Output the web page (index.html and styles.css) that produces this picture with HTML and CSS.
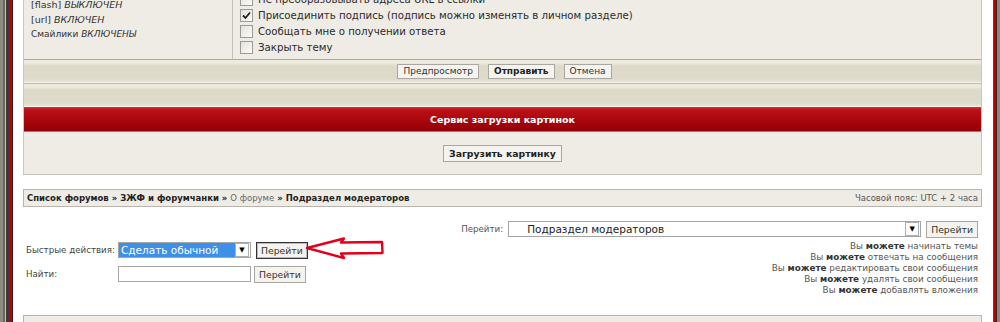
FILE: index.html
```html
<!DOCTYPE html>
<html lang="ru">

<head>
    <meta charset="UTF-8">
    <title>Подраздел модераторов</title>
    <link rel="stylesheet" href="styles.css">
</head>

<body>
    <div class="frame">
        <div class="edge-left"></div>

        <div class="sheet">
            <div class="post-box">
                <div class="options">
                    <div class="opt-info">
                        <p>[flash] <i>ВЫКЛЮЧЕН</i></p>
                        <p>[url] <i>ВКЛЮЧЕН</i></p>
                        <p class="smiles">Смайлики <i>ВКЛЮЧЕНЫ</i></p>
                    </div>
                    <div class="opt-checks">
                        <div class="check"><span class="box"></span>Не преобразовывать адреса URL в ссылки</div>
                        <div class="check"><span class="box">
                                <svg width="9" height="9" viewBox="0 0 9 9">
                                    <path d="M1 4.5 L3.5 7 L8 1.5" fill="none" stroke="#222" stroke-width="1.8" />
                                </svg>
                            </span>Присоединить подпись (подпись можно изменять в личном разделе)</div>
                        <div class="check"><span class="box"></span>Сообщать мне о получении ответа</div>
                        <div class="check"><span class="box"></span>Закрыть тему</div>
                    </div>
                </div>

                <div class="bar bar-buttons">
                    <button class="btn">Предпросмотр</button>
                    <button class="btn btn-main">Отправить</button>
                    <button class="btn">Отмена</button>
                </div>
                <div class="bar"></div>

                <div class="red-head">Сервис загрузки картинок</div>
                <div class="upload">
                    <button class="btn btn-main">Загрузить картинку</button>
                </div>
            </div>

            <div class="crumbs">
                <div class="crumbs-path">
                    Список форумов &raquo; ЗЖФ и форумчанки &raquo; <span class="grey">О форуме</span> &raquo; Подраздел модераторов
                </div>
                <div class="crumbs-tz">Часовой пояс: UTC + 2 часа</div>
            </div>

            <div class="tools">
                <div class="tools-left">
                    <div class="tool-row">
                        <span class="tool-label">Быстрые действия:</span>
                        <div class="fake-select quick">
                            <span class="sel-text">Сделать обычной</span>
                            <span class="sel-arrow">&#9660;</span>
                        </div>
                        <button class="btn btn-go focused">Перейти</button>
                    </div>
                    <div class="tool-row">
                        <span class="tool-label">Найти:</span>
                        <div class="fake-input"></div>
                        <button class="btn btn-go btn-find">Перейти</button>
                    </div>
                </div>

                <div class="tools-right">
                    <div class="jump">
                        <span class="jump-label">Перейти:</span>
                        <div class="fake-select jump-select">
                            <span class="sel-text">Подраздел модераторов</span>
                            <span class="sel-arrow">&#9660;</span>
                        </div>
                        <button class="btn btn-go">Перейти</button>
                    </div>
                    <ul class="rules">
                        <li>Вы <b>можете</b> начинать темы</li>
                        <li>Вы <b>можете</b> отвечать на сообщения</li>
                        <li>Вы <b>можете</b> редактировать свои сообщения</li>
                        <li>Вы <b>можете</b> удалять свои сообщения</li>
                        <li>Вы <b>можете</b> добавлять вложения</li>
                    </ul>
                </div>

                <!-- красная стрелка поверх скриншота -->
                <svg class="arrow" width="82" height="24" viewBox="0 0 82 24">
                    <path d="M2 11 L39 1.5 L36 5.5 L77 5 L77.5 16 L36 16.5 L39 21 Z" fill="#fff" stroke="#e3001b"
                        stroke-width="2.4" stroke-linejoin="round" />
                </svg>
            </div>

            <div class="footer-bar"></div>
        </div>

        <div class="edge-right"></div>
    </div>
</body>

</html>
```

FILE: styles.css
```css
body {
    margin: 0;
    padding: 0;
    height: 322px;
    overflow: hidden;
    background: #fff;
    font-family: "DejaVu Sans", Verdana, sans-serif;
    color: #333;
}

.frame {
    display: flex;
    height: 322px;
}

.edge-left {
    width: 13px;
    flex-shrink: 0;
    background: linear-gradient(to right, #8e8b80 0 3px, #6b685f 3px 5px, #c8c4b6 5px 6px, #3c3a36 6px 9px, #c00000 9px 12px, #3a1a1a 12px 13px);
}

.edge-right {
    width: 7px;
    flex-shrink: 0;
    background: linear-gradient(to right, #4a4a48 0 1px, #c00000 1px 3px, #3a2020 3px 4px, #8a8880 4px 7px);
}

.sheet {
    flex: 1;
    padding: 0 11px 0 10px;
    margin-top: -11px;
    position: relative;
}

/* форма ответа */

.post-box {
    border-left: 1px solid #c9c6bd;
    border-right: 1px solid #c9c6bd;
    border-bottom: 1px solid #c4c1b8;
}

.options {
    display: flex;
    background: #efece5;
    border-bottom: 1px solid #aaa8a2;
    height: 70px;
}

.opt-info {
    width: 209px;
    padding: 8px 0 0 7px;
    border-right: 1px solid #c3c0b8;
    box-sizing: border-box;
}

.opt-info p {
    margin: 0;
    font-size: 9.5px;
    line-height: 15px;
    color: #333;
}

.opt-info .smiles {
    font-size: 9px;
}

.opt-checks {
    padding: 2px 0 0 7px;
}

.check {
    display: flex;
    align-items: center;
    height: 16px;
    font-size: 10.2px;
    color: #2a2a2a;
}

.box {
    width: 11px;
    height: 11px;
    border: 1px solid #9c9a94;
    background: linear-gradient(135deg, #e4e2da, #fbfaf6);
    margin-right: 5px;
    display: flex;
    align-items: center;
    justify-content: center;
}

.bar {
    height: 22px;
    background: linear-gradient(#ece9dd 0 3px, #dedac9 6px, #dedac9 18px, #e6e2d5);
    border-bottom: 1px solid #f6f4ee;
    border-top: 1px solid #bdbab2;
}

.bar-buttons {
    border-top: none;
    display: flex;
    justify-content: center;
    align-items: center;
    gap: 9px;
    padding-left: 4px;
}

.btn {
    font-family: "DejaVu Sans", Verdana, sans-serif;
    font-size: 9px;
    color: #333;
    background: #f5f3ee;
    border: 1px solid #a9a7a0;
    padding: 0 5px;
    height: 15px;
    line-height: 13px;
}

.btn-main {
    font-weight: bold;
    color: #222;
}

.red-head {
    height: 24px;
    line-height: 25px;
    text-align: center;
    color: #fff;
    font-size: 9.5px;
    font-weight: bold;
    background: linear-gradient(#d0363c 0, #bb1016 3px, #a8060c 14px, #930009);
    border-bottom: 1px solid #8a7f7a;
}

.upload {
    height: 42px;
    background: #efece5;
    display: flex;
    justify-content: center;
    align-items: center;
}

.upload .btn {
    height: 17px;
    font-size: 9.3px;
    padding: 0 5px;
}

/* навигация */

.crumbs {
    margin-top: 14px;
    height: 16px;
    border: 1px solid #b8b5ae;
    background: #efece5;
    display: flex;
    justify-content: space-between;
    align-items: center;
    padding: 0 3px;
    font-size: 8.5px;
}

.crumbs-path {
    font-weight: bold;
    color: #222;
}

.crumbs-path .grey {
    color: #666;
    font-weight: normal;
}

.crumbs-tz {
    color: #555;
}

.tools {
    position: relative;
    height: 108px;
    display: flex;
    justify-content: space-between;
    padding: 14px 4px 0 3px;
    box-sizing: border-box;
}

.tools-left {
    padding-top: 21px;
}

.tool-row {
    display: flex;
    align-items: center;
    height: 16px;
    margin-bottom: 8px;
    font-size: 8.7px;
    color: #444;
}

.tool-label {
    width: 92px;
    flex-shrink: 0;
    white-space: nowrap;
}

.fake-select {
    display: flex;
    align-items: center;
    border: 1px solid #a5a5a5;
    background: #fff;
    height: 14px;
    box-sizing: content-box;
    font-size: 10.5px;
}

.sel-text {
    flex: 1;
    white-space: nowrap;
}

.sel-arrow {
    width: 12px;
    height: 12px;
    border: 1px solid #b0b0b0;
    font-size: 7px;
    line-height: 12px;
    text-align: center;
    color: #000;
    background: #fff;
    margin-right: 1px;
}

.quick {
    width: 131px;
}

.quick .sel-text {
    background: #3d8fe8;
    color: #fff;
    height: 14px;
    line-height: 14px;
    padding-left: 2px;
}

.fake-input {
    width: 131px;
    height: 14px;
    border: 1px solid #a5a5a5;
    background: #fff;
}

.btn-go {
    height: 17px;
    margin-left: 5px;
    font-size: 9.3px;
    padding: 0 4px;
}

.btn-find {
    margin-left: 3px;
}

.focused {
    border: 1px solid #333;
    box-shadow: inset 0 0 0 1px #bbb;
}

.tools-right {
    display: flex;
    flex-direction: column;
    align-items: flex-end;
}

.jump {
    display: flex;
    align-items: center;
    height: 16px;
    font-size: 8.7px;
    color: #555;
}

.jump-label {
    margin-right: 5px;
}

.jump-select {
    width: 411px;
    color: #222;
}

.jump-select .sel-text {
    padding-left: 18px;
}

.rules {
    list-style: none;
    margin: 4px 0 0;
    padding: 0;
    text-align: right;
    font-size: 8.8px;
    line-height: 11px;
    color: #555;
}

.rules b {
    color: #333;
}

.arrow {
    position: absolute;
    left: 282px;
    top: 30px;
}

.footer-bar {
    height: 10px;
    border: 1px solid #b8b5ae;
    background: #efece5;
}
```
